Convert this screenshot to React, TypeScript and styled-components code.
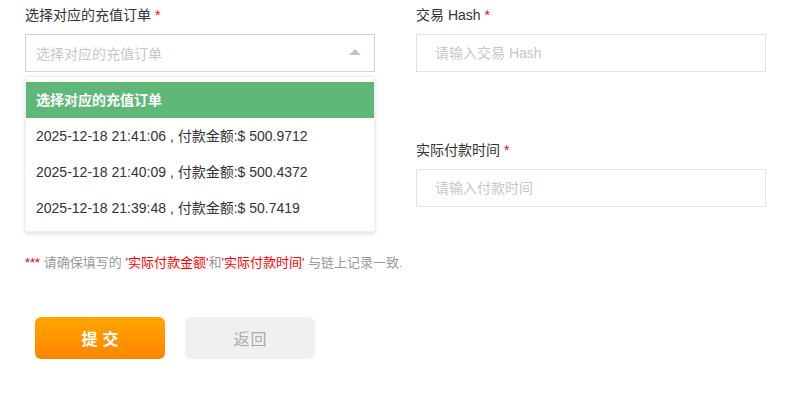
import styled, { createGlobalStyle } from "styled-components";

const GlobalStyle = createGlobalStyle`
  body {
    margin: 0;
    background: #fff;
    font-family: "Liberation Sans", Arial, "Noto Sans CJK SC", sans-serif;
    color: #333;
  }
`;

const Page = styled.div`
  padding: 5px 0 0 25px;
  width: 788px;
  height: 420px;
  box-sizing: border-box;
`;

const FormGrid = styled.div`
  display: grid;
  grid-template-columns: 350px 350px;
  column-gap: 41px;
  row-gap: 68px;
`;

const Field = styled.div`
  position: relative;
  display: flex;
  flex-direction: column;
`;

const Label = styled.label`
  font-size: 14px;
  line-height: 20px;
  margin-bottom: 9px;
  color: #333;
`;

const Required = styled.span`
  color: #ff0000;
  margin-left: 4px;
`;

const TextInput = styled.input<{ $pad?: number }>`
  height: 38px;
  box-sizing: border-box;
  border: 1px solid #e2e2e2;
  padding: 0 0 0 ${(p) => p.$pad ?? 18}px;
  font-family: inherit;
  font-size: 14px;
  color: #333;
  outline: none;
  &::placeholder {
    color: #c7c7c7;
  }
`;

const SelectBox = styled.div`
  height: 38px;
  box-sizing: border-box;
  border: 1px solid #d2d2d2;
  display: flex;
  align-items: center;
  justify-content: space-between;
  padding: 0 13px 0 10px;
  font-size: 14px;
  color: #c7c7c7;
`;

const Arrow = styled.span`
  width: 0;
  height: 0;
  border-left: 6px solid transparent;
  border-right: 6px solid transparent;
  border-bottom: 6px solid #c2c2c2;
  margin-top: -2px;
`;

const Options = styled.ul`
  position: absolute;
  top: 71px;
  left: 0;
  right: 0;
  z-index: 10;
  margin: 0;
  padding: 5px 0;
  list-style: none;
  background: #fff;
  border: 1px solid #eee;
  box-shadow: 0 2px 4px rgba(0, 0, 0, 0.12);
`;

const Option = styled.li<{ $active?: boolean }>`
  height: 36px;
  line-height: 36px;
  padding: 0 10px;
  font-size: 14px;
  white-space: nowrap;
  color: ${(p) => (p.$active ? "#fff" : "#333")};
  background: ${(p) => (p.$active ? "#5fb878" : "transparent")};
  font-weight: ${(p) => (p.$active ? "bold" : "normal")};
`;

const Note = styled.p`
  margin: 46px 0 0;
  font-size: 13px;
  line-height: 20px;
  color: #999;
`;

const Red = styled.span`
  color: #ff0000;
`;

const Actions = styled.div`
  display: flex;
  gap: 20px;
  margin: 44px 0 0 10px;
`;

const Button = styled.button<{ $primary?: boolean }>`
  width: 130px;
  height: 42px;
  border: none;
  border-radius: 6px;
  font-family: inherit;
  font-size: 16px;
  letter-spacing: ${(p) => (p.$primary ? "5px" : "1px")};
  padding-left: ${(p) => (p.$primary ? "11px" : "7px")};
  font-weight: ${(p) => (p.$primary ? "bold" : "normal")};
  color: ${(p) => (p.$primary ? "#fff" : "#aaa")};
  background: ${(p) =>
    p.$primary ? "linear-gradient(180deg, #ffa600 0%, #ff8400 100%)" : "#f0f0f0"};
  cursor: pointer;
`;

const orders = [
  "2025-12-18 21:41:06 , 付款金额:$ 500.9712",
  "2025-12-18 21:40:09 , 付款金额:$ 500.4372",
  "2025-12-18 21:39:48 , 付款金额:$ 50.7419",
];

export default function App() {
  return (
    <Page>
      <GlobalStyle />
      <FormGrid>
        <Field>
          <Label>
            选择对应的充值订单<Required>*</Required>
          </Label>
          <SelectBox>
            <span>选择对应的充值订单</span>
            <Arrow />
          </SelectBox>
          <Options>
            <Option $active>选择对应的充值订单</Option>
            {orders.map((o) => (
              <Option key={o}>{o}</Option>
            ))}
          </Options>
        </Field>
        <Field>
          <Label>
            交易 Hash<Required>*</Required>
          </Label>
          <TextInput placeholder="请输入交易 Hash" />
        </Field>
        {/* left cell under the open dropdown */}
        <Field />
        <Field>
          <Label>
            实际付款时间<Required>*</Required>
          </Label>
          <TextInput placeholder="请输入付款时间" />
        </Field>
      </FormGrid>
      <Note>
        <Red>***</Red> 请确保填写的 <Red>'实际付款金额'</Red>和<Red>'实际付款时间'</Red> 与链上记录一致.
      </Note>
      <Actions>
        <Button $primary>提交</Button>
        <Button>返回</Button>
      </Actions>
    </Page>
  );
}
